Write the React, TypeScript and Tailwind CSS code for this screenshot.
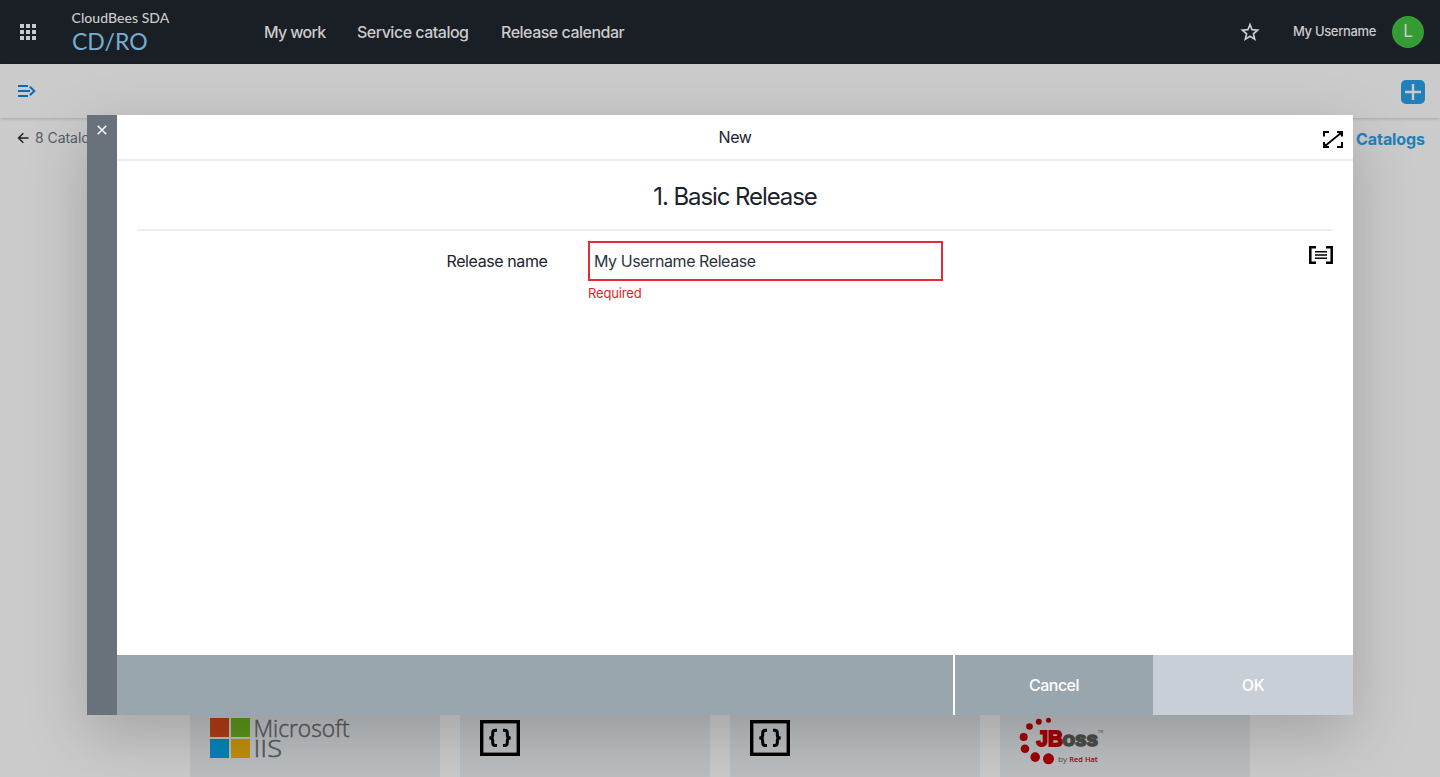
import React from "react";

const GridIcon = () => (
  <svg width="16" height="16" viewBox="0 0 16 16" fill="#cbcbcb">
    {[0, 6, 12].map((y) => [0, 6, 12].map((x) => <rect key={`${x}-${y}`} x={x} y={y} width="4" height="4" />))}
  </svg>
);

const StarIcon = () => (
  <svg width="20" height="20" viewBox="0 0 20 20" fill="none" stroke="#cbcbcb" strokeWidth="1.7">
    <path d="M10 2.600l2.100 5.100 5.500.450-4.200 3.600 1.300 5.400-4.700-2.900-4.700 2.900 1.300-5.400-4.200-3.600 5.500-.450z" />
  </svg>
);

const MenuOpenIcon = () => (
  <svg width="18" height="12" viewBox="0 0 18 12" fill="none" stroke="#0a6cb0" strokeWidth="2">
    <path d="M0 1h10M0 6h12M0 11h10M11.800 1.800L16.300 6l-4.500 4.200" />
  </svg>
);

const BackIcon = () => (
  <svg width="12" height="12" viewBox="0 0 12 12" fill="none" stroke="#1b1f26" strokeWidth="1.4">
    <path d="M11.500 6H1.700M6.300 1.200L1.500 6l4.800 4.800" />
  </svg>
);

const ExpandIcon = () => (
  <svg width="20" height="17" viewBox="0 0 20 17" fill="none" stroke="#000" strokeWidth="2">
    <path d="M1 5.500V1h5M14 16h5v-5M14 1h5v4.500M1 11v5h5" />
    <path d="M2 15L18 2" strokeWidth="1.700" />
    <path d="M14.500 1H19v4.500zM1 11.500V16h4.500z" fill="#000" stroke="none" />
  </svg>
);

const ParamIcon = () => (
  <svg width="24" height="18" viewBox="0 0 24 18" fill="none" stroke="#000">
    <path d="M7 1.200H1.300v15.600H7M17 1.200h5.700v15.600H17" strokeWidth="2.500" />
    <path d="M6 5.700h12M6 9h12M6 12.300h12" strokeWidth="1.600" />
  </svg>
);

const BracesIcon = () => (
  <svg width="40" height="36" viewBox="0 0 40 36" fill="none" stroke="#000">
    <rect x="1.700" y="1.700" width="36.600" height="32.600" strokeWidth="3.400" />
    <path
      d="M17 10.300h-1.500c-2 0-2.800 1-2.800 2.700v2.200c0 1.700-1.200 2.700-3.400 2.700 2.200 0 3.400 1 3.400 2.700v2.200c0 1.700.8 2.800 2.800 2.800H17M23 10.300h1.500c2 0 2.800 1 2.800 2.700v2.200c0 1.700 1.200 2.700 3.400 2.700-2.200 0-3.400 1-3.400 2.700v2.200c0 1.700-.8 2.800-2.800 2.800H23"
      strokeWidth="3"
    />
  </svg>
);

const MicrosoftLogo = () => (
  <svg width="145" height="42" viewBox="0 0 145 42" className="overflow-visible">
    <rect x="0" y="0" width="19" height="19" fill="#b03b17" />
    <rect x="21" y="0" width="19" height="19" fill="#5c941c" />
    <rect x="0" y="21" width="19" height="19" fill="#0484b8" />
    <rect x="21" y="21" width="19" height="19" fill="#c08f0c" />
    <g fill="#58595b" fontFamily="'Open Sans', sans-serif" fontWeight="300" fontSize="24" stroke="#58595b" strokeWidth=".5">
      <text x="43.500" y="18.500" textLength="96" lengthAdjust="spacingAndGlyphs">Microsoft</text>
      <text x="43.500" y="39.300" textLength="28.500" lengthAdjust="spacingAndGlyphs">IIS</text>
    </g>
  </svg>
);

const JBossLogo = () => (
  <svg width="86" height="48" viewBox="0 0 86 48" className="overflow-visible">
    <g fill="#a00003">
      <circle cx="28.500" cy="2.300" r="2.500" />
      <circle cx="18.800" cy="3.800" r="3" />
      <circle cx="9.500" cy="8.500" r="3.300" />
      <circle cx="3.700" cy="19" r="4" />
      <circle cx="5" cy="30.800" r="4.300" />
      <circle cx="15.200" cy="39.100" r="4.800" />
      <circle cx="28.500" cy="40.800" r="5.500" />
    </g>
    <g fontFamily="'Liberation Sans', Arial, sans-serif" fontWeight="700">
      <text x="16.500" y="28" fontSize="22.500" fill="#a00003" stroke="#a00003" strokeWidth="1.800" textLength="26.500" lengthAdjust="spacingAndGlyphs">JB</text>
      <text x="42.500" y="28" fontSize="21" fill="#4b4c48" stroke="#4b4c48" strokeWidth="1.600" textLength="35.500" lengthAdjust="spacingAndGlyphs">oss</text>
      <text x="78" y="14.500" fontSize="3.500" fill="#707274">TM</text>
    </g>
    <g fontFamily="'Open Sans', sans-serif" fontSize="7.200">
      <text x="38" y="43.500" fill="#4b4c48" textLength="9" lengthAdjust="spacingAndGlyphs">by</text>
      <text x="49.300" y="43.500" fill="#a00003" fontWeight="600" textLength="28.500" lengthAdjust="spacingAndGlyphs">Red Hat</text>
    </g>
  </svg>
);

function Header() {
  return (
    <header className="flex h-16 shrink-0 items-center bg-[#1a1e25] pr-4 pl-5 text-[#cbcbcb]">
      <GridIcon />
      <div className="ml-[35px] w-[193px] font-['Lato'] whitespace-nowrap">
        <div className="mt-[-3px] pt-px pl-[0.5px] text-[14px] leading-[18px] font-medium tracking-[0.05px]">CloudBees SDA</div>
        <div className="mt-[2px] mb-px pl-px text-[23px] leading-[24px] text-[#75aed0]">CD/RO</div>
      </div>
      <nav className="flex text-base font-medium tracking-[-0.5px]">
        <a className="w-[93px] tracking-[-0.68px]">My work</a>
        <a className="w-[144px]">Service catalog</a>
        <a>Release calendar</a>
      </nav>
      <div className="ml-auto flex items-center">
        <StarIcon />
        <span className="ml-[33px] w-[83px] text-[13px] font-medium tracking-[-0.33px] whitespace-nowrap">My Username</span>
        <span className="ml-4 flex size-8 items-center justify-center rounded-full bg-[#359b35] text-[17px]">L</span>
      </div>
    </header>
  );
}

function Dialog() {
  return (
    <section className="absolute top-[115px] left-[87px] flex h-[600px] w-[1266px] bg-white shadow-[0_20px_60px_rgba(0,0,0,0.2)]">
      <div className="flex w-[30px] justify-center bg-[#69717a] pt-[10px]">
        <svg width="10" height="10" viewBox="0 0 10 10" className="block" stroke="#fff" strokeWidth="1.5">
          <path d="M.700.700l8.600 8.600M9.300.700L.700 9.300" />
        </svg>
      </div>
      <div className="flex flex-1 flex-col">
        <div className="relative flex h-[46px] items-center justify-center border-b-2 border-[#e9eef2] text-base tracking-[-0.35px]">
          New
          <div className="absolute top-4 right-[10px]">
            <ExpandIcon />
          </div>
        </div>
        <div className="mx-5 flex h-[70px] items-center justify-center border-b-2 border-[#e9eef2] pt-[3px] text-2xl tracking-[-1.08px]">
          1. Basic Release
        </div>
        <div className="flex flex-1 pt-[10px] pr-5 pl-[329.5px]">
          <label className="w-[141.5px] text-base leading-10 tracking-[-0.4px]">Release name</label>
          <div className="w-[355px]">
            <div className="flex h-10 items-center border-2 border-[#e12d33] pl-1 text-base tracking-[-0.43px] text-[#2c343e]">
              My Username Release
            </div>
            <div className="mt-[3px] text-[13px] leading-[18px] tracking-[-0.15px] text-[#dc2329]">Required</div>
          </div>
          <div className="mt-[5px] ml-auto">
            <ParamIcon />
          </div>
        </div>
        <footer className="flex h-[60px] bg-[#9aa6ae] text-base tracking-[-0.5px] text-white">
          <div className="flex-1" />
          <div className="flex w-[200px] items-center justify-center border-l-2 border-white font-medium">Cancel</div>
          <div className="flex w-[200px] items-center justify-center bg-[#c8cfd7] font-medium">OK</div>
        </footer>
      </div>
    </section>
  );
}

const catalogLogos = [MicrosoftLogo, BracesIcon, BracesIcon, JBossLogo];

export default function App() {
  return (
    <div className="relative flex h-[777px] w-[1440px] flex-col overflow-hidden bg-[#cbcbcb] font-['Inter'] text-[#1b232c]">
      <Header />
      <div className="flex h-[54px] shrink-0 items-center justify-between pr-[15px] pl-[18px] shadow-[0_1px_3px_rgba(0,0,0,0.18)]">
        <MenuOpenIcon />
        <div className="mt-[2px] flex size-6 items-center justify-center rounded-[5px] bg-[#2180b9]">
          <svg width="16" height="16" viewBox="0 0 16 16" stroke="#cbcbcb" strokeWidth="2.4">
            <path d="M8 0v16M0 8h16" />
          </svg>
        </div>
      </div>
      <div className="flex h-10 items-center justify-between pr-[15px] pl-[17px]">
        <div className="flex items-center gap-[6px] text-[14px] tracking-[-0.05px] text-[#555c65]">
          <BackIcon />
          <span className="-mt-[2px]">8 Catalogs</span>
        </div>
        <div className="mt-[2px] text-base font-bold tracking-[-0.005em] text-[#2180b9]">Catalogs</div>
      </div>
      <main className="mt-auto flex gap-5 pl-[190px]">
        {catalogLogos.map((Logo, i) => (
          <div key={i} className={`h-[79px] w-[250px] bg-[#bbbfc2] pl-5 ${i === 1 || i === 2 ? "pt-[22px]" : "pt-5"}`}>
            <Logo />
          </div>
        ))}
      </main>
      <Dialog />
    </div>
  );
}
